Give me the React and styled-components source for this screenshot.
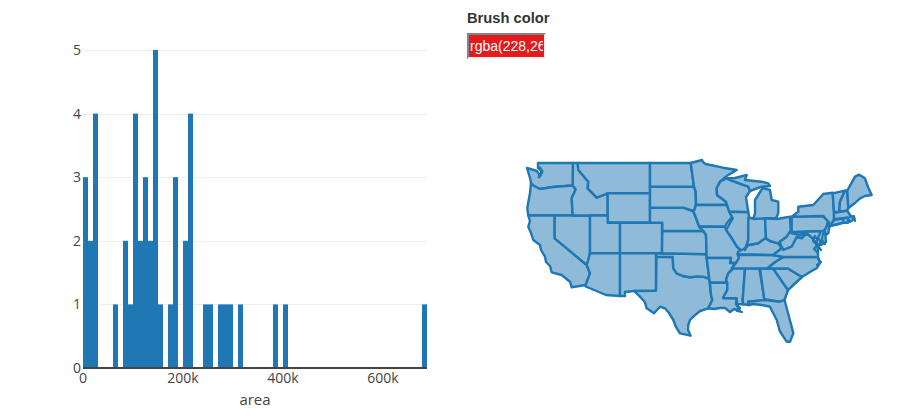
import React from "react";
import styled, { createGlobalStyle } from "styled-components";

const Global = createGlobalStyle`
  html, body { margin: 0; padding: 0; background: #fff; }
  body { font-family: "Liberation Sans", Arial, sans-serif; overflow: hidden; }
`;

const Page = styled.div`
  display: flex;
  width: 905px;
  height: 418px;
  overflow: hidden;
`;
const ChartPane = styled.div`
  flex: 0 0 467px;
  height: 418px;
`;
const ChartSvg = styled.svg`
  display: block;
  width: 467px;
  height: 418px;
`;
const SidePane = styled.div`
  flex: 1;
  display: flex;
  flex-direction: column;
  padding-top: 10px;
`;
const Label = styled.label`
  font-size: 14.7px;
  font-weight: 700;
  line-height: 16px;
  color: #333;
  margin-bottom: 7px;
`;
const ColorInput = styled.input`
  box-sizing: border-box;
  width: 79px;
  height: 26px;
  padding: 1px 1px;
  border-width: 2px;
  border-style: solid;
  border-color: #858585 #efefef #efefef #858585;
  background: #e41a1c;
  color: #fff;
  font-family: "Liberation Sans", Arial, sans-serif;
  font-size: 14px;
  outline: none;
`;
const MapSvg = styled.svg`
  display: block;
  width: 438px;
  height: 359px;
`;
const Grid = styled.line`
  stroke: #eee;
  stroke-width: 1;
`;
const Tick = styled.text`
  font-family: "Open Sans", Verdana, sans-serif;
  font-size: ${(p) => p.$size || 14}px;
  fill: #444;
`;
const Bar = styled.rect`
  fill: #1f77b4;
`;
const State = styled.polygon`
  fill: #8fbbd9;
  stroke: #1f77b4;
  stroke-width: 2.4;
  stroke-linejoin: round;
`;
const Detail = styled.path`
  fill: none;
  stroke: #1f77b4;
  stroke-width: ${(p) => p.$w || 2.2};
  stroke-linejoin: round;
  stroke-linecap: round;
`;

const COUNTS = { 0:3,1:2,2:4,6:1,8:2,9:1,10:4,11:2,12:3,13:2,14:5,15:1,17:1,18:3,20:2,21:4,24:1,25:1,27:1,28:1,29:1,31:1,38:1,40:1 };
const Y0 = 368;
const UNIT = 63.6;

const STATES = [
  "538,163 573,163 573,185.5 553,187 540,189 534,186 531,183 530,178 527,168 537,171 540,176 542,171 538,168",
  "531,183 534,186 540,189 553,187 573,185.5 575.7,189.3 571.7,198.3 572.7,215.5 528.3,215.5 527.3,208.3 528.5,201 530,193.3",
  "528.3,215.5 554.7,215.5 554.7,238.3 586.7,265 590,273.3 585.7,285 571.7,287.3 570,281.7 561.7,275 551.7,272.3 550,266 546,262 545,256.7 541,250 540,245 533.3,240 531,233 528.3,226.7 530,221",
  "554.7,215.5 590,215.5 590,253.3 588.3,260 586.7,265 554.7,238.3",
  "577.7,163 578.3,170 588.3,181.7 587.7,188.3 596.7,197.7 607.7,193.3 607.7,215.5 572.7,215.5 571.7,198.3 575.7,189.3 572.7,185.5 573,163",
  "577.7,163 650,163 650,193.3 607.7,193.3 596.7,197.7 587.7,188.3 588.3,181.7 578.3,170",
  "607.7,193.3 650,193.3 650,222.7 607.7,222.7",
  "590,215.5 607.7,215.5 607.7,222.7 620,222.7 620,253.3 590,253.3",
  "620,222.7 662,222.7 662,253.3 620,253.3",
  "590,253.3 620,253.3 620,296 606,295 585.7,286.5 585.7,285 590,273.3 586.7,265 588.3,260",
  "620,253.3 656,253.3 656,290.7 634,291 625,292 625,296 620,296",
  "656.5,256.7 672.7,257 673.3,268.3 676.7,273.3 683,276 690,277.3 697,276.5 703.3,276.7 709.3,279 711,295 712.3,300 708.3,308.3 700,311 693.3,316.7 690,320 688.3,325 688,330 690.7,335.7 680,333.3 676,327 673.3,320 669,313 665,308.3 660,306.7 654,313.3 646.7,308.3 645,302.3 640,296.7 634,291 656,290.7",
  "656,253.3 706.5,254 706.7,258 709.3,279 703.3,276.7 697,276.5 690,277.3 683,276 676.7,273.3 673.3,268.3 672.7,257 656.5,256.7",
  "662.3,231 703.3,231 706,235 706.7,254.3 662,253.3",
  "650,207.7 683.3,207.7 693.3,211 699.3,226.7 703.3,231 662.3,231 662.3,222.7 650,222.7",
  "650,186.7 694,186.7 695.7,191.7 696,205 694.3,210 693.3,211 683.3,207.7 650,207.7",
  "650,163 690.7,163 694,186.7 650,186.7",
  "690.7,163 702,160 703,162 705.7,164 723,167.7 736.7,170 727,175.7 720,181.7 716.7,188.3 717,195 726,201.7 727,205 696,205 695.7,191.7 694,186.7",
  "696,205 727,205 729.3,211.7 732,217 727,223 725,226.7 699.3,226.7 693.3,211 694.3,210",
  "717,195 716.7,188.3 720,181.7 726.7,178.3 731.7,180.7 748.3,186.7 750,191 746,197 748.3,212.3 729.3,211.7 727,205 726,201.7",
  "729.3,211.7 748.3,212.3 749.3,218 748.3,240 745,250 742.7,251.7 736.7,246.7 731.7,238.3 726,230 732.7,218.3",
  "725,226.7 726,230 731.7,238.3 736.7,246.7 742,251.7 739,258 736,263 730,263 731,258 706.7,258 706,235 703.3,231 699.3,226.7",
  "706.7,258 731,258 730,263 734,263 733,268.3 728.3,273.3 726,280 727.3,282.7 710,282.7 709.3,279",
  "710,282.7 727.3,282.7 727.3,290 723,298 736.7,298.3 736,304 740,311 734,309 730,312 725,308 720,308 714,309 708.3,308.3 712.3,300 711,295",
  "733.3,268.3 745,268.3 742.7,300 743.3,304.3 736.7,304 736.7,298.3 723,298 727.3,290 727.3,282.7 726,280 728.3,273.3",
  "745,268.3 759.3,268.3 764.3,298.3 765,300 748.3,301.7 749,305 743.3,304.3 742.7,300",
  "760,268.5 773.3,268.5 788,290 784.5,300 780,301.7 764.3,299.3",
  "773,268.5 788,268.5 802,277 788,290",
  "783.3,257 818,257 820,263 817,268 810,272 802,277 788,268.5 773,268.5 767,268.5 775,262",
  "738,255 773,255 783.3,257 775,262 767,268.5 731.7,268.3 736,263 739,258",
  "738.3,251.7 745,248.3 748.3,245 758.3,243.3 765,238.3 770,241 778.3,243.3 781.7,248.3 776.7,252.3 773.3,255 737.3,254.3",
  "748.3,218 765,218.3 766,238.3 765,238.3 758.3,243.3 748.3,245 745,248.3 745,250 748.3,240",
  "765,218.3 776.7,219 790,216.7 790.7,231.7 786.7,236.7 780,241.7 778.3,243.3 770,241 766,238.3",
  "762.7,188 770,190 771.7,200 778.3,201.7 778.3,213.3 776,218.3 765,218.3 753.3,219 755,213.3 755,200",
  "726.7,178.3 735,178 746.7,175 745,180 761.7,181.7 768.3,183.3 770,186 761.7,186.7 750,191 748.3,186.7 731.7,180.7",
  "791.7,216.7 823.3,216 828.3,221.7 826,228 825,231 791.7,232.3",
  "798.3,206.7 813.3,205 823.3,194 832.7,192.7 834,213.3 834,220 830,226 828.3,221.7 823.3,216 791.7,216.7 798.3,211.7",
  "832.7,193.3 845,190.7 840,201.7 839.3,211.7 834,212",
  "847.3,190.7 848.3,208.3 846.7,210.7 839.3,211.7 840,201.7 845,190.7",
  "847.3,190.7 855,176.7 859.3,174.7 865,178.3 868,187 871.7,195 865,196 860,198.3 855,203 850,206.7 848.3,208.3",
  "834,212.7 847.3,210.7 850,215 854.3,219 850,221.7 847.3,217.7 834,219.3",
  "834,220 843.3,218.3 843.3,222.7 830,226",
  "843.3,218.3 848,217.7 848,222.7 843.3,222.7",
  "828.3,221.7 829.3,226.7 828.3,233.3 825.7,235 823,232 826,228",
  "791.7,232.3 825,231 826,242 821,245 815,245 818,238 812,238 806.7,233.3 800,235 795,236",
  "790,231.7 791.7,233.3 800,235 806.7,233.3 801.7,238.3 796.7,237.3 791.7,246.7 783.3,250 780,243.3 780,241.7 786.7,236.7",
  "776.7,252.3 781.7,248.3 783.3,250 791.7,246.7 796.7,237.3 801.7,238.3 806.7,233.3 812,238 817,243 818,250 818,257 783.3,257 773.3,255",
  "765,300 780,301.7 784.5,300 791.7,326.7 793.3,333.3 790,341.7 786.7,341.7 780,331.7 776.7,320 770,306.7 761.7,305 753,304 749,305 748.3,301.7",
];
const DETAILS = [
  { d: "M815 236 L813 241 L817 245 L814 249 L818 253" },
  { d: "M820 233 L818 238 L821 242 L818 246 L821 250" },
  { d: "M823 233 L822 240 L825 244" },
  { d: "M818 259 L821 262 L817 265" },
  { d: "M850 217 L854 216 L855 221" },
  { d: "M830 226 L838 224.5 L843 223" },
  { d: "M540 168 L542 172 L539 177", w: 3 },
  { d: "M736 304 L740 308 L737 311 L742 312" },
];

const App = () => (
  <Page>
    <Global />
    <ChartPane>
      <ChartSvg viewBox="0 0 467 418">
        {[1, 2, 3, 4, 5].map((v) => {
          const y = Math.round(Y0 - v * UNIT) + 0.5;
          return <Grid key={v} x1="83" x2="427" y1={y} y2={y} />;
        })}
        {Object.entries(COUNTS).map(([i, n]) => (
          <Bar key={i} x={83 + 5 * i} y={Y0 - n * UNIT} width="5" height={n * UNIT} />
        ))}
        <Bar x="422" y={Y0 - UNIT} width="5" height={UNIT} />
        <line x1="83" x2="427" y1="368" y2="368" stroke="#444" strokeWidth="2" />
        {[0, 1, 2, 3, 4, 5].map((v) => (
          <Tick key={v} x="81" y={Y0 - v * UNIT + 5} textAnchor="end">{v}</Tick>
        ))}
        <Tick x="83" y="383" textAnchor="middle">0</Tick>
        <Tick x="183" y="383" textAnchor="middle">200k</Tick>
        <Tick x="283" y="383" textAnchor="middle">400k</Tick>
        <Tick x="383" y="383" textAnchor="middle">600k</Tick>
        <Tick x="255" y="405" textAnchor="middle" $size={15}>area</Tick>
      </ChartSvg>
    </ChartPane>
    <SidePane>
      <Label htmlFor="brush">Brush color</Label>
      <ColorInput id="brush" readOnly value="rgba(228,26,28,1)" />
      <MapSvg viewBox="467 59 438 359">
        {STATES.map((p, i) => <State key={i} points={p} />)}
        {DETAILS.map(({ d, w }, i) => <Detail key={i} d={d} $w={w} />)}
      </MapSvg>
    </SidePane>
  </Page>
);

export default App;
